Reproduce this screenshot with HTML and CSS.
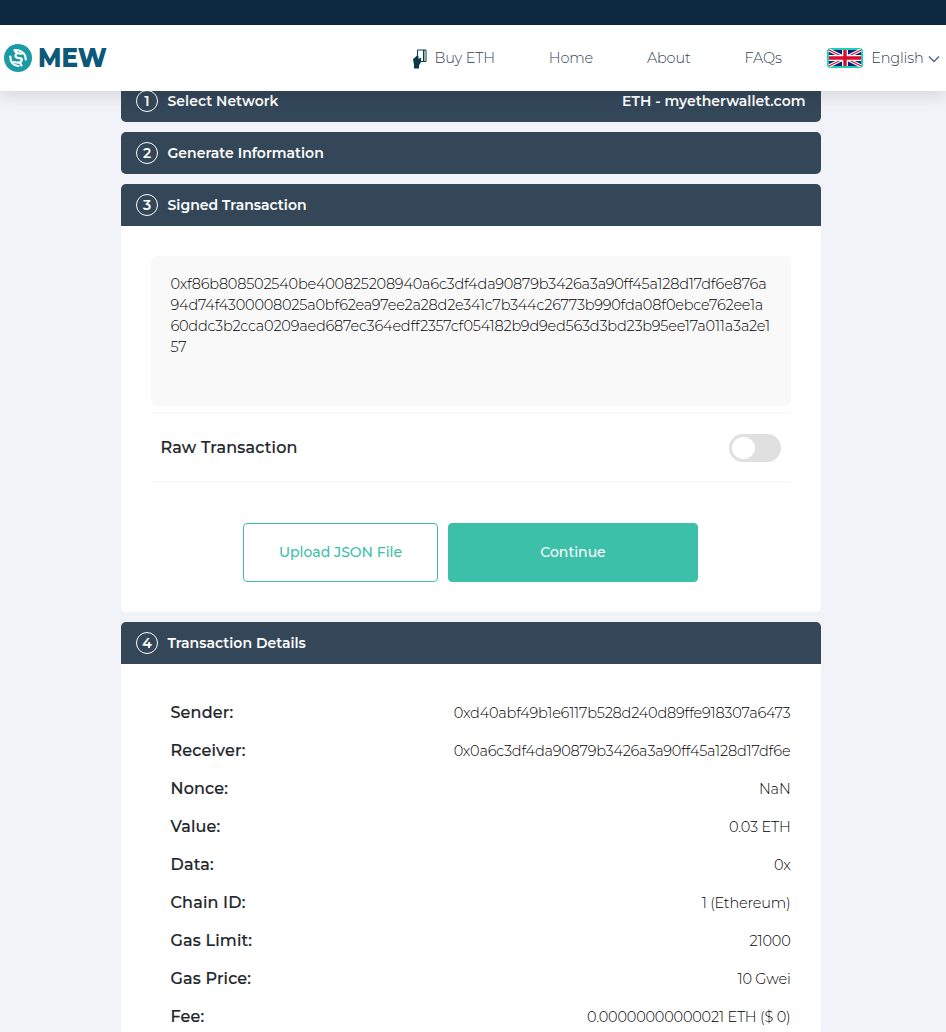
FILE: index.html
```html
<!DOCTYPE html>
<html lang="en">
<head>
<meta charset="utf-8">
<title>MEW - Send Offline</title>
<link rel="stylesheet" href="styles.css">
</head>
<body>
<div class="topbar"></div>
<header class="header">
  <div class="logo">
    <svg class="logo-mark" viewBox="0 0 28 28"><circle cx="14" cy="14" r="14" fill="#1b9aa6"/><g fill="none" stroke="#fff" stroke-linecap="round" stroke-width="2.200"><path d="M6.300 12.500C6.300 18 9.500 21.800 14.500 22"/><path d="M21.700 15.500C21.700 10 18 6 11 6"/><path d="M10.500 6.300C12 8.500 14 9.800 18 9.500"/><path d="M13 9C9.500 13 12.500 14 15.500 14.200C18.500 14.500 18.500 16.500 16 18.500"/><path d="M10 18C12 18.700 14 18.800 16 18.500L17.500 21.500"/></g></svg>
    <span class="logo-text">MEW</span>
  </div>
  <nav class="nav">
    <a class="buy"><svg class="buy-icon" viewBox="0 0 14 20"><path d="M4.500 9V1H13V12.500H8" fill="#fff" stroke="#053c47" stroke-width="1"/><path d="M10.700 1V12" stroke="#053c47" stroke-width="1.400"/><path d="M0 10L2 8.500L4 6.500L5.500 7V10L8 8.500V13L6 16.500V19.500H1V16L0.500 13Z" fill="#053c47"/></svg><span>Buy ETH</span></a>
    <a>Home</a>
    <a>About</a>
    <a>FAQs</a>
    <a class="lang">
      <svg class="flag" viewBox="0 0 36 20"><rect width="36" height="20" rx="3.500" fill="#21cdb4"/><rect x="2" y="2" width="32" height="16" rx="1" fill="#012179"/><path d="M2 2L34 18M34 2L2 18" stroke="#fff" stroke-width="3.400"/><path d="M2 2L34 18M34 2L2 18" stroke="#d80d2b" stroke-width="1.200"/><path d="M18 2V18M2 10H34" stroke="#fff" stroke-width="6"/><path d="M18 2V18M2 10H34" stroke="#d80d2b" stroke-width="3.400"/></svg>
      <span>English</span>
      <svg class="chev" viewBox="0 0 12 8"><path d="M1 1.500L6 6.500L11 1.500" fill="none" stroke="#506b85" stroke-width="1.500"/></svg>
    </a>
  </nav>
</header>
<main class="content">
  <section class="panel">
    <div class="bar"><span class="num">1</span><span>Select Network</span><span class="bar-right">ETH - myetherwallet.com</span></div>
  </section>
  <section class="panel">
    <div class="bar"><span class="num">2</span><span>Generate Information</span></div>
  </section>
  <section class="panel">
    <div class="bar open"><span class="num">3</span><span>Signed Transaction</span></div>
    <div class="signed">
      <div class="raw-box">
        <div>0xf86b808502540be400825208940a6c3df4da90879b3426a3a90ff45a128d17df6e876a</div>
        <div>94d74f4300008025a0bf62ea97ee2a28d2e341c7b344c26773b990fda08f0ebce762ee1a</div>
        <div>60ddc3b2cca0209aed687ec364edff2357cf054182b9d9ed563d3bd23b95ee17a011a3a2e1</div>
        <div>57</div>
      </div>
      <div class="raw-row"><span>Raw Transaction</span><span class="switch"></span></div>
      <div class="buttons"><button class="btn upload">Upload JSON File</button><button class="btn continue">Continue</button></div>
    </div>
  </section>
  <section class="panel">
    <div class="bar open"><span class="num">4</span><span>Transaction Details</span></div>
    <div class="details">
      <div class="row"><b>Sender:</b><span>0xd40abf49b1e6117b528d240d89ffe918307a6473</span></div>
      <div class="row"><b>Receiver:</b><span>0x0a6c3df4da90879b3426a3a90ff45a128d17df6e</span></div>
      <div class="row"><b>Nonce:</b><span>NaN</span></div>
      <div class="row"><b>Value:</b><span>0.03 ETH</span></div>
      <div class="row"><b>Data:</b><span>0x</span></div>
      <div class="row"><b>Chain ID:</b><span>1 (Ethereum)</span></div>
      <div class="row"><b>Gas Limit:</b><span>21000</span></div>
      <div class="row"><b>Gas Price:</b><span>10 Gwei</span></div>
      <div class="row"><b>Fee:</b><span>0.00000000000021 ETH ($ 0)</span></div>
    </div>
  </section>
</main>
</body>
</html>
```
FILE: styles.css
```css
* { box-sizing: border-box; }
body { margin: 0; height: 1032px; overflow: hidden; background: #f2f3f9; font-family: Montserrat, Inter, "Open Sans", sans-serif; color: #212529; }
.topbar { height: 25px; background: #0b2840; }
.header { position: relative; z-index: 2; height: 66px; background: #fff; display: flex; align-items: center; justify-content: space-between; padding: 0 6px 0 4px; box-shadow: 0 6px 14px rgba(0, 0, 0, 0.1); clip-path: inset(0 0 -30px 0); }
.logo { display: flex; align-items: center; gap: 6px; }
.logo-mark { width: 28px; height: 28px; }
.logo-text { font-weight: 800; font-size: 27px; line-height: 32px; color: #0b5878; transform: scaleX(0.91); transform-origin: 0 50%; }
.nav { display: flex; align-items: center; gap: 54px; font-size: 14.5px; line-height: 20px; letter-spacing: -0.18px; font-weight: 300; color: #2f4157; padding-bottom: 1px; }
.buy, .lang { display: flex; align-items: center; }
.buy { gap: 8px; }
.buy-icon { width: 14px; height: 20px; position: relative; top: 1px; left: 1px; }
.lang { margin-left: -9px; }
.flag { width: 36px; height: 20px; margin-right: 8.5px; }
.chev { width: 12px; height: 8px; margin-left: 4.5px; position: relative; top: 1px; }
.content { width: 700px; margin: -11px 0 0 121px; display: flex; flex-direction: column; gap: 10px; }
.panel { background: #fff; border-radius: 5px; }
.bar { height: 42px; border-radius: 5px; background: #344759; color: #fff; display: flex; align-items: center; padding: 0 15.5px 0 15px; font-size: 14px; font-weight: 600; letter-spacing: 0.03px; }
.bar.open { border-radius: 5px 5px 0 0; }
.num { width: 22px; height: 22px; border: 1px solid #fff; border-radius: 50%; display: flex; align-items: center; justify-content: center; margin-right: 9.5px; }
.bar-right { margin-left: auto; }
.signed { height: 386px; padding: 30px; }
.raw-box { height: 150px; border-radius: 5px; background: #f9f9f9; padding: 18px 19.5px; font-size: 14.5px; letter-spacing: -0.2px; line-height: 21px; font-weight: 300; color: #000; white-space: nowrap; }
.raw-row { margin-top: 6px; height: 71px; border-top: 2px solid #f9f9f9; border-bottom: 2px solid #f9f9f9; display: flex; justify-content: space-between; align-items: center; padding: 0 10px 0 9.5px; font-size: 16px; font-weight: 500; letter-spacing: 0.2px; -webkit-text-stroke: 0.2px #212529; }
.switch { width: 52px; height: 28px; border-radius: 14px; background: #e0e0e0; padding: 3px; }
.switch::before { content: ""; display: block; width: 23px; height: 22px; border-radius: 50%; background: #fff; }
.buttons { margin-top: 40px; padding-right: 1px; display: flex; justify-content: center; gap: 10px; }
.btn { height: 59px; border-radius: 4px; font-family: inherit; font-size: 14px; font-weight: 500; border: 1px solid #3cc0aa; padding: 0 0 2px; }
.upload { width: 195px; background: #fff; color: #3cc0aa; }
.continue { width: 250px; background: #3cc0aa; color: #fff; }
.details { padding: 29px 30.5px 0 49.5px; }
.row { height: 38px; display: flex; align-items: center; justify-content: space-between; font-size: 14.5px; letter-spacing: -0.19px; font-weight: 300; color: #000; }
.row span { padding-top: 2px; }
.row b { color: #212529; font-size: 16px; font-weight: 500; letter-spacing: 0.18px; -webkit-text-stroke: 0.2px #212529; }
```
